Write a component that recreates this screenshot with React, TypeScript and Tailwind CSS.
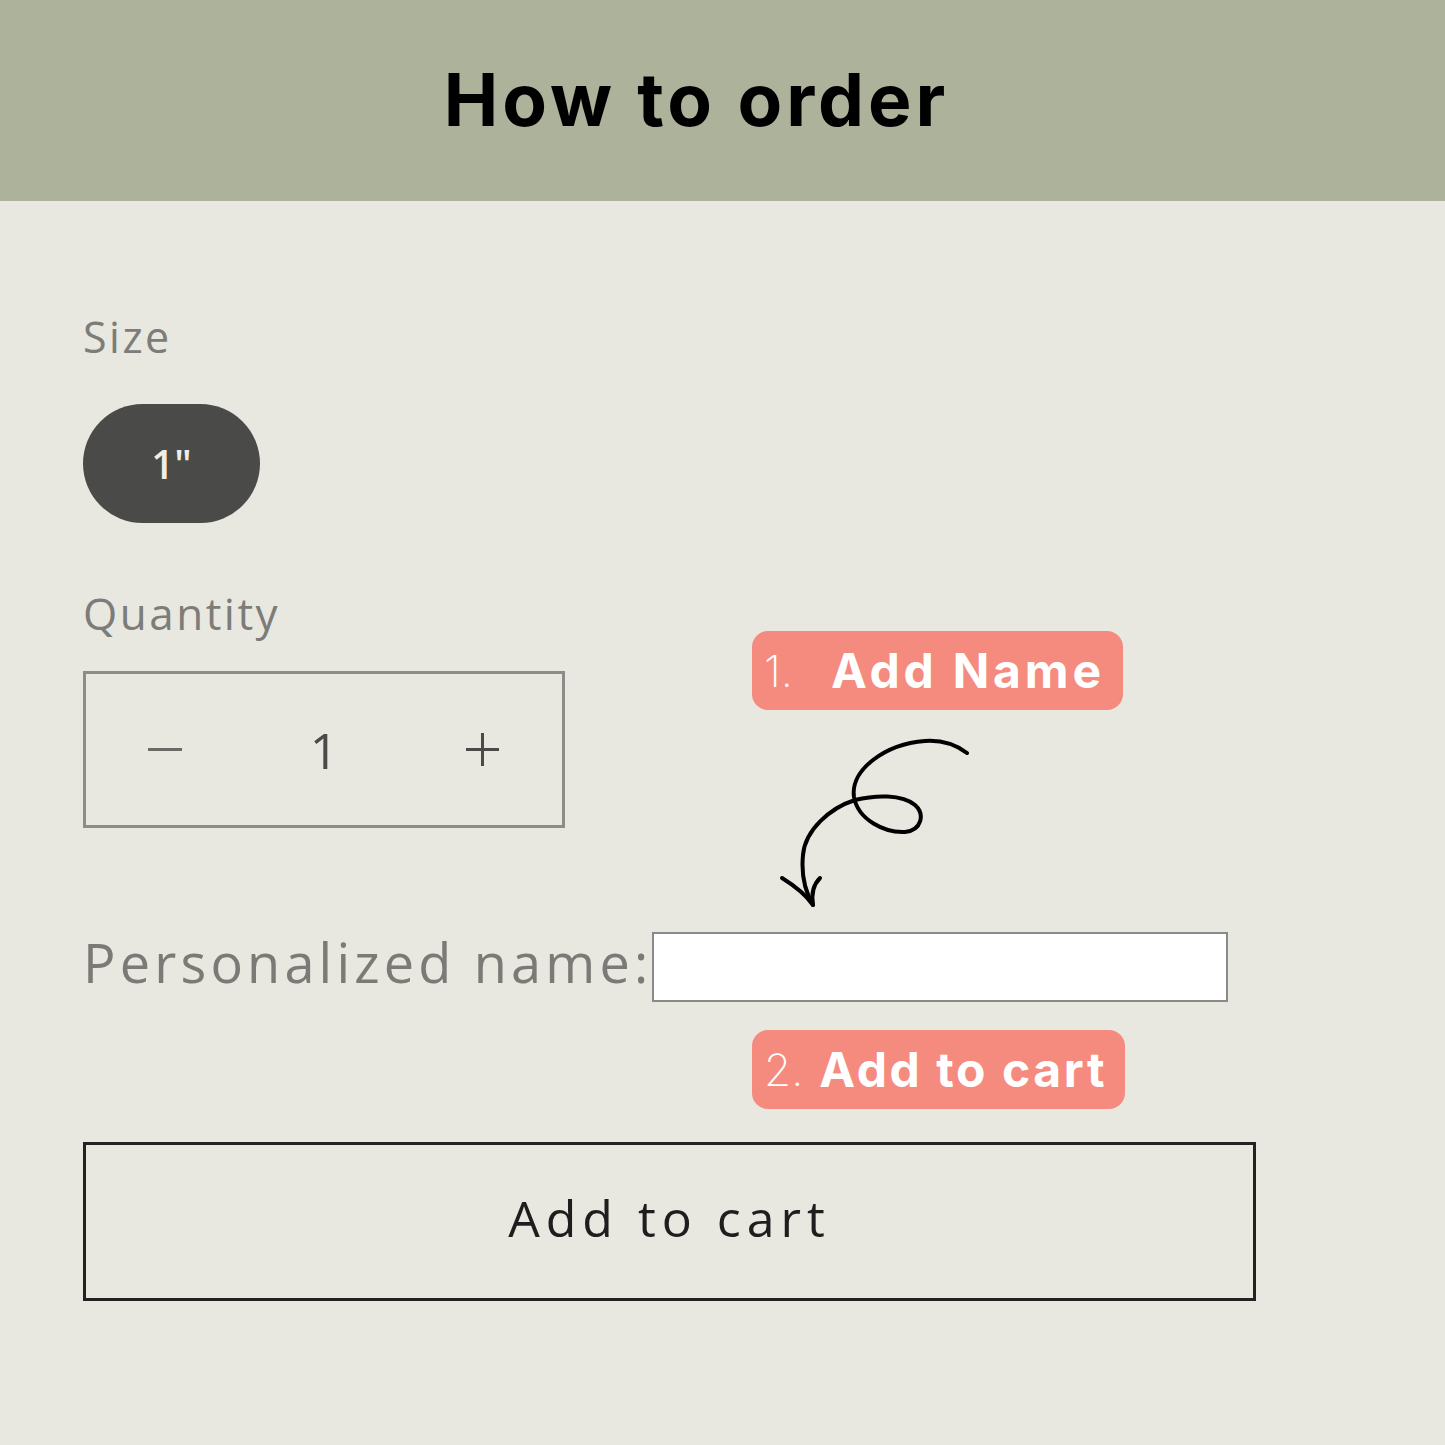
import React from "react";

const Arrow = () => (
  <svg
    width="200"
    height="180"
    viewBox="770 730 200 180"
    fill="none"
    stroke="#000"
    strokeWidth="4"
    strokeLinecap="round"
    strokeLinejoin="round"
  >
    <path d="M967 753 C955 744 940 740 925 741 C885 744 850 770 854 797 C858 820 885 833 905 832 C922 830 925 814 915 805 C902 794 875 795 855 800 C830 808 805 830 803 855 C801 875 806 893 813 905" />
    <path d="M782 878 C795 886 806 895 813 905 C811 893 814 884 820 878" />
  </svg>
);

const Badge = ({ num, label, gap }: { num: string; label: string; gap: string }) => (
  <div className="flex h-[79px] items-center rounded-[16px] bg-[#f58b7e] pl-[12px] pr-[18px] text-white">
    <span className="font-['Inter',sans-serif] text-[44px] font-extralight leading-none">{num}</span>
    <span className={`${gap} font-['Inter',sans-serif] text-[48px] font-bold leading-none`}>{label}</span>
  </div>
);

export default function App() {
  return (
    <div className="min-h-[1445px] w-[1445px] bg-[#e8e7e0] font-['Open_Sans',sans-serif]">
      <header className="flex h-[201px] items-center justify-center bg-[#adb29b] pb-[2px] pr-[52px]">
        <h1 className="font-['Inter',sans-serif] text-[73px] font-bold tracking-[4px] text-black">How to order</h1>
      </header>

      <main className="relative px-[83px] pt-[108px]">
        <div className="text-[43px] leading-[56px] tracking-[2.5px] text-[#7c7c78]">Size</div>
        <div className="mt-[39px] flex h-[119px] w-[177px] items-center justify-center rounded-full bg-[#4a4a48] text-[40px] font-semibold text-[#eeeee8]">
          1"
        </div>

        <div className="mt-[62px] text-[44px] leading-[56px] tracking-[2.5px] text-[#7c7c78]">Quantity</div>
        <div className="mt-[30px] flex h-[157px] w-[482px] items-center border-[3px] border-[#8c8c88] text-[#4a4a48]">
          <span className="flex w-[160px] justify-center">
            <span className="h-[3px] w-[34px] bg-[#6a6a66]" />
          </span>
          <span className="w-[160px] text-center text-[50px] leading-none">1</span>
          <span className="relative flex w-[160px] justify-center">
            <span className="relative h-[33px] w-[33px]">
              <span className="absolute left-0 top-[15px] h-[3px] w-[33px] bg-[#4a4a48]" />
              <span className="absolute left-[15px] top-0 h-[33px] w-[3px] bg-[#4a4a48]" />
            </span>
          </span>
        </div>

        <div className="mt-[104px] flex items-start">
          <span className="text-[54px] leading-[60px] tracking-[4.2px] text-[#7a7a76]">Personalized name:</span>
          <div className="h-[70px] w-[576px] border-2 border-[#8a8a86] bg-white" />
        </div>

        <button className="mt-[140px] flex h-[159px] w-[1173px] items-center justify-center border-[3px] border-[#222] pb-[6px] text-[50px] tracking-[6px] text-[#1e1e1e]">
          Add to cart
        </button>

        <div className="absolute left-[752px] top-[430px]">
          <Badge num="1." label="Add Name" gap="ml-[38px] tracking-[3.8px]" />
        </div>
        <div className="absolute left-[770px] top-[529px]">
          <Arrow />
        </div>
        <div className="absolute left-[752px] top-[829px]">
          <Badge num="2." label="Add to cart" gap="ml-[16px] tracking-[2.6px]" />
        </div>
      </main>
    </div>
  );
}
